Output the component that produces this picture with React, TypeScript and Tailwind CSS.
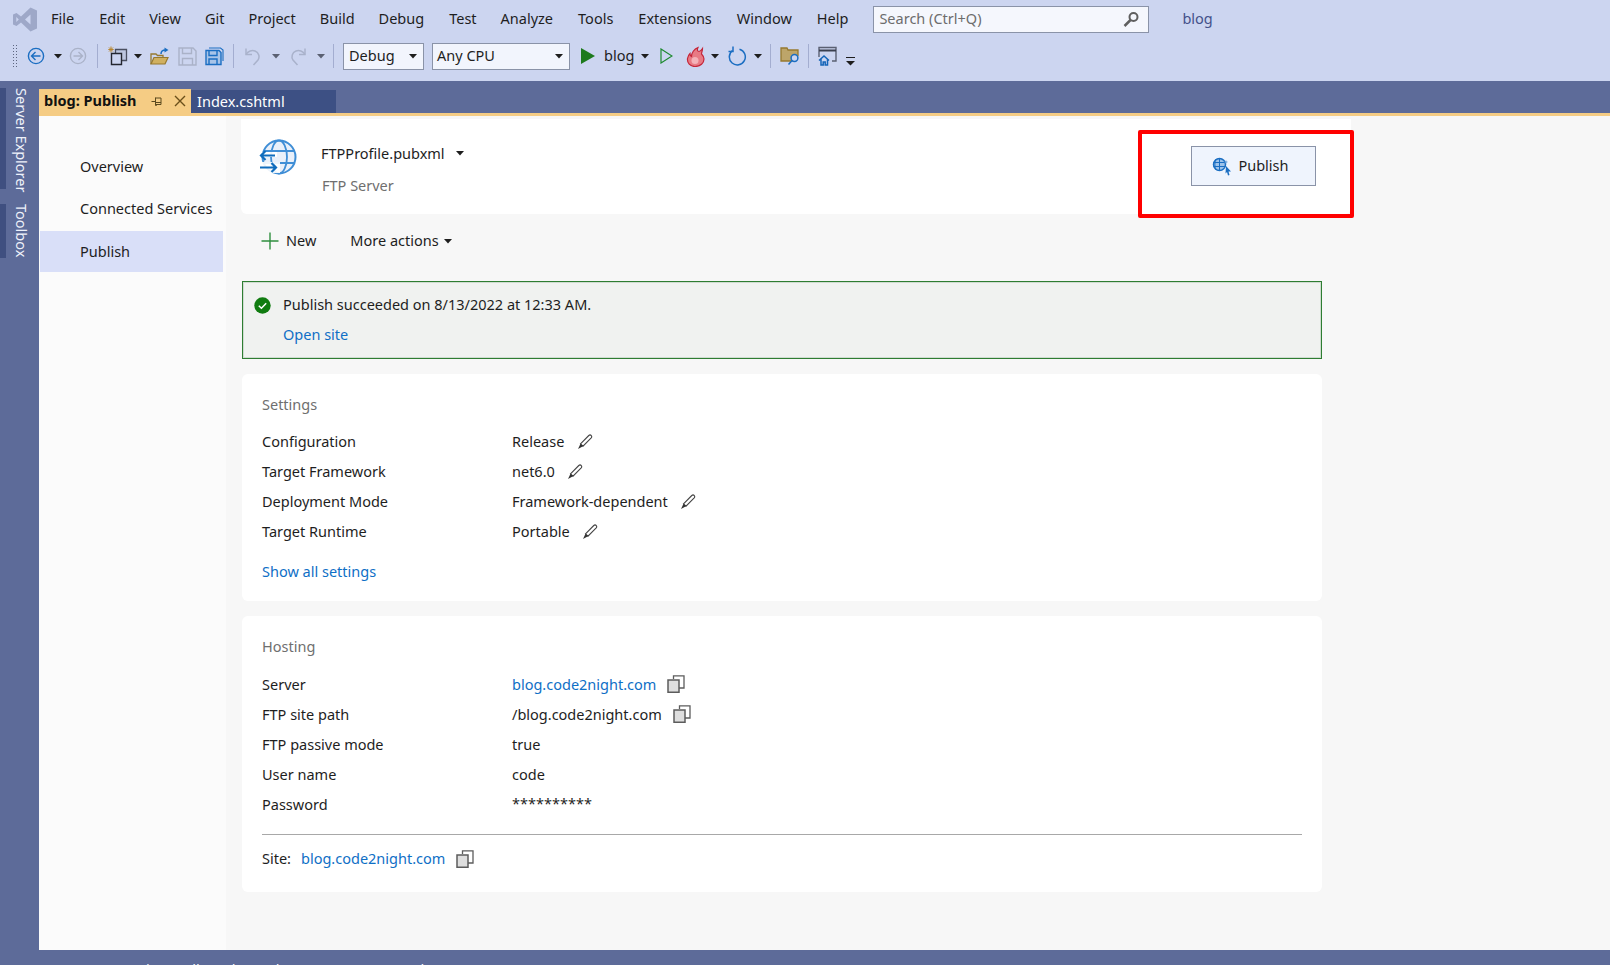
import React from "react";

const Caret = ({ c = "#1e1e1e", className = "" }: { c?: string; className?: string }) => (
  <svg width="8" height="5" viewBox="0 0 8 5" className={className}><path d="M0 0h8L4 4.5z" fill={c} /></svg>
);

const Sep = ({ className = "" }: { className?: string }) => <div className={`w-px h-[24px] bg-[#a3add0] ${className}`} />;

const Back = ({ c, flip = false }: { c: string; flip?: boolean }) => (
  <svg width="18" height="18" viewBox="0 0 18 18" fill="none" stroke={c} strokeWidth="1.4">
    <circle cx="9" cy="9" r="7.6" />
    <path d={flip ? "M4.5 9h9M9.5 5l4 4-4 4" : "M13.5 9h-9M8.5 5l-4 4 4 4"} />
  </svg>
);

const NewProj = () => (
  <svg width="20" height="20" viewBox="0 0 20 20" fill="none">
    <path d="M3 .5v6M.3 3.5h5.4M1 1.5l4 4M5 1.5l-4 4" stroke="#b8862f" strokeWidth="1" />
    <path d="M7.5 3.5h11v11h-11z" fill="#bdc6df" stroke="#4a4f60" strokeWidth="1.3" />
    <path d="M3.5 7.5h10v11h-10z" fill="#ccd5f0" stroke="#23262f" strokeWidth="1.4" />
  </svg>
);

const OpenF = () => (
  <svg width="19" height="19" viewBox="0 0 19 19" fill="none">
    <path d="M1 17V7h5l1.500 1.500H13V11" stroke="#96792f" strokeWidth="1.3" />
    <path d="M1 17l3-6.500h14L15 17z" fill="#d0b060" stroke="#96792f" strokeWidth="1.200" />
    <path d="M11 7c0-2.500 2-4 4.500-4" stroke="#1b6ec2" strokeWidth="1.500" />
    <path d="M14.500 .5L18.500 3l-4 2.500z" fill="#1b6ec2" />
  </svg>
);

const Floppy = ({ c, all = false }: { c: string; all?: boolean }) => (
  <svg width="19" height="19" viewBox="0 0 19 19" fill="none" stroke={c} strokeWidth="1.400">
    {all && <path d="M4 1h11.500l2.500 2v11" strokeWidth="1.100" />}
    <path d={all ? "M1 3.500h13l2 2V17.500H1z" : "M1 1h14l3 3v14H1z"} fill={all ? "#a8c4e8" : "none"} />
    {all ? <path d="M4 3.500v5h8v-5M4 17.500v-5.500h8v5.500" /> : <path d="M4.500 1v5.500h9V1M4.500 18v-6.500h10V18" />}
  </svg>
);

const Undo = ({ flip = false }: { flip?: boolean }) => (
  <svg width="17" height="19" viewBox="0 0 17 19" fill="none" stroke="#a9b2cb" strokeWidth="1.500" style={flip ? { transform: "scaleX(-1)" } : undefined}>
    <path d="M2 1.500v6h6" />
    <path d="M2 7.500C4 4 8 3 11 4c4 1.500 5 6 3 9l-4.500 5" />
  </svg>
);

const Fire = () => (
  <svg width="19" height="21" viewBox="0 0 19 21">
    <path d="M9 20.500c-5 0-8-3.500-7.500-8C2 10 3 8.500 4 7.500c0 1.500.5 2.500 1.500 3C5.500 7 8 3 12 1.500 10.800 4 11.500 5.500 13 5.500c.8 0 2-.8 3.500-3C16.500 5 15.500 6.500 15.500 8c1.500 1.500 2.500 3 2.500 5 0 4-3.500 7.500-9 7.500z" fill="#e87a84" stroke="#c4263a" strokeWidth="1.200" />
    <ellipse cx="9" cy="14.500" rx="3.500" ry="3.500" fill="#f4b2b8" />
  </svg>
);

const Refresh = () => (
  <svg width="19" height="20" viewBox="0 0 19 20" fill="none" stroke="#1b6ec2" strokeWidth="1.500">
    <path d="M11.500 3.200A8 8 0 1 1 4.500 4.500" />
    <path d="M5 0.500v5H0.500" />
  </svg>
);

const FolderSearch = () => (
  <svg width="20" height="20" viewBox="0 0 20 20" fill="none">
    <path d="M1 15V2h6l1 2h10v5.500L12 15z" fill="#bda56a" stroke="#96792f" strokeWidth="1.300" />
    <circle cx="14.500" cy="12" r="3.400" fill="#ccd5f0" stroke="#1b6ec2" strokeWidth="1.500" />
    <path d="M12 14.500l-3.500 4" stroke="#1b6ec2" strokeWidth="1.500" />
  </svg>
);

const WinHome = () => (
  <svg width="19" height="20" viewBox="0 0 19 20" fill="none">
    <path d="M1 11V1.500h17V15h-4" stroke="#5a6072" strokeWidth="1.400" />
    <path d="M1 4.500h17" stroke="#3a3f4e" strokeWidth="2" />
    <path d="M1 14.500L6 10l5 4.500M3 13v6h2.200v-3h2v3H9.500v-6" stroke="#1565b8" strokeWidth="1.500" />
  </svg>
);

const Overflow = () => (
  <svg width="9" height="9" viewBox="0 0 9 9"><path d="M0 .5h9" stroke="#1e1e1e" strokeWidth="1" /><path d="M0 4h9L4.500 8.500z" fill="#1e1e1e" /></svg>
);

const Grip = () => (
  <div className="w-[6px] h-[24px] bg-[radial-gradient(#5d6680_0.8px,transparent_1px)] bg-[length:3px_3px]" />
);

const VsLogo = () => (
  <svg width="24" height="25" viewBox="0 0 24 25">
    <path d="M17.500 0.500L24 3.500V21.500L17.500 24.500 8 15.500 3.500 19 0 17.500V7.500L3.500 6 8 9.500zM17.500 7.500L12 12.500l5.500 5zM3.300 10v5l2.500-2.500z" fill="#9ea8c8" fillRule="evenodd" />
  </svg>
);

const SearchIco = () => (
  <svg width="17" height="17" viewBox="0 0 17 17" fill="none" stroke="#5f5f5f">
    <circle cx="10.500" cy="6" r="4" strokeWidth="2" />
    <path d="M7.500 9l-6 6" strokeWidth="2.500" />
  </svg>
);

const Globe = () => (
  <svg width="39" height="38" viewBox="0 0 39 38" fill="none">
    <circle cx="21" cy="18" r="16.500" fill="#e9f0fa" stroke="#3f8ed6" strokeWidth="2" />
    <ellipse cx="21" cy="18" rx="8" ry="16.500" stroke="#3f8ed6" strokeWidth="1.800" />
    <path d="M5.500 12h31M5 24h32" stroke="#3f8ed6" strokeWidth="1.800" />
    <path d="M0 13h19v5H0zM3 23h19v11H3z" fill="#fff" opacity=".9" />
    <path d="M17 16.500H3M7.500 12L3 16.500 7.500 21" stroke="#0f6cbd" strokeWidth="2.200" />
    <path d="M2 28.500h16M13.500 24l4.500 4.500-4.500 4.500" stroke="#0f6cbd" strokeWidth="2.200" />
  </svg>
);

const PubIcon = () => (
  <svg width="20" height="19" viewBox="0 0 20 19" fill="none">
    <circle cx="7.500" cy="7.500" r="6" fill="#9cc2ea" stroke="#1b6ec2" strokeWidth="1.500" />
    <path d="M1.500 5.500h12M1.500 9.500h12M7.500 1.500v12M4 2c-1.500 3-1.500 8 0 11" stroke="#1b6ec2" strokeWidth="1" />
    <path d="M14 3.500v3M12.500 5h3" stroke="#6aa0d8" strokeWidth="1" />
    <path d="M14 9l5 5.500h-2.500l1 3.500-1.500.5-1-3.500-1.500 1.500z" fill="#1b6ec2" />
  </svg>
);

const Plus = () => (
  <svg width="18" height="18" viewBox="0 0 18 18" fill="none" stroke="#2f8f3f" strokeWidth="1.400"><path d="M9 .5v17M.5 9h17" /></svg>
);

const Check = () => (
  <svg width="17" height="17" viewBox="0 0 17 17">
    <circle cx="8.500" cy="8.500" r="8.200" fill="#107c10" />
    <path d="M4.800 8.800l2.600 2.500 4.800-5" fill="none" stroke="#fff" strokeWidth="1.500" />
  </svg>
);

const Pencil = ({ className = "" }: { className?: string }) => (
  <svg width="16" height="16" viewBox="0 0 16 16" fill="none" className={className}>
    <path d="M3.500 9.800L11.800 1.500c.8-.7 1.800-.6 2.400 0 .6.700.6 1.700 0 2.400L6 12.200z" stroke="#444" strokeWidth="1.100" />
    <path d="M3.500 9.800L6 12.200 1 15z" fill="#333" />
  </svg>
);

const Copy = ({ className = "" }: { className?: string }) => (
  <svg width="18" height="18" viewBox="0 0 18 18" fill="none" className={className}>
    <path d="M6.500 4V.8h10.500V13H12" stroke="#5c5c5c" strokeWidth="1.300" />
    <path d="M1 5h11v12.200H1z" fill="#dedede" stroke="#5c5c5c" strokeWidth="1.500" />
  </svg>
);

const Row = ({ k, children }: { k: string; children: React.ReactNode }) => (
  <div className="flex items-center h-[30px]">
    <div className="w-[250px]">{k}</div>
    <div className="flex items-center">{children}</div>
  </div>
);

const Link = ({ children }: { children: React.ReactNode }) => <span className="text-[#0f6fc6]">{children}</span>;

const menu: [string, string][] = [
  ["File", "ml-[14px]"], ["Edit", "ml-[25px]"], ["View", "ml-[24px]"], ["Git", "ml-[24px]"], ["Project", "ml-[24px]"],
  ["Build", "ml-[24px]"], ["Debug", "ml-[24px]"], ["Test", "ml-[25px]"], ["Analyze", "ml-[24px]"], ["Tools", "ml-[25px]"],
  ["Extensions", "ml-[25px]"], ["Window", "ml-[25px]"], ["Help", "ml-[25px]"],
];

export default function App() {
  return (
    <div className="relative w-[1610px] h-[965px] overflow-hidden flex flex-col bg-[#5d6b99] text-[14.5px] text-[#1e1e1e] font-['Noto_Sans','Open_Sans',sans-serif]">
      <header className="h-[81px] shrink-0 bg-[#ccd5f0] flex flex-col">
        <div className="h-[38px] flex items-center pl-[13px] shrink-0">
          <VsLogo />
          <nav className="flex items-center">
            {menu.map(([m, c]) => (
              <span key={m} className={c}>{m}</span>
            ))}
          </nav>
          <div className="ml-[25px] w-[276px] h-[27px] bg-[#f5f7fd] border border-[#8a93a8] flex items-center justify-between pl-[5px] pr-[8px] text-[#6d6d6d]">
            <span>Search (Ctrl+Q)</span>
            <SearchIco />
          </div>
          <span className="ml-[33px] text-[#44518a]">blog</span>
        </div>
        <div className="h-[36px] flex items-center pl-[12px]">
          <Grip />
          <div className="ml-[9px]"><Back c="#1b6ec2" /></div>
          <Caret className="ml-[9px]" />
          <div className="ml-[7px]"><Back c="#aab2c8" flip /></div>
          <Sep className="ml-[10px]" />
          <div className="ml-[10px]"><NewProj /></div>
          <Caret className="ml-[6px]" />
          <div className="ml-[8px]"><OpenF /></div>
          <div className="ml-[9px]"><Floppy c="#aab2c8" /></div>
          <div className="ml-[8px]"><Floppy c="#1b6ec2" all /></div>
          <Sep className="ml-[9px]" />
          <div className="ml-[10px]"><Undo /></div>
          <Caret c="#5a6072" className="ml-[11px]" />
          <div className="ml-[10px]"><Undo flip /></div>
          <Caret c="#5a6072" className="ml-[10px]" />
          <Sep className="ml-[8px]" />
          <div className="ml-[9px] w-[81px] h-[27px] bg-[#f2f5fd] border border-[#8a93a8] flex items-center justify-between pl-[5px] pr-[6px]">
            <span>Debug</span><Caret />
          </div>
          <div className="ml-[8px] w-[138px] h-[27px] bg-[#f2f5fd] border border-[#8a93a8] flex items-center justify-between pl-[4px] pr-[6px]">
            <span>Any CPU</span><Caret />
          </div>
          <svg width="14" height="16" viewBox="0 0 14 16" className="ml-[11px]"><path d="M0 0l14 8-14 8z" fill="#1d7a1d" /></svg>
          <span className="ml-[9px]">blog</span>
          <Caret className="ml-[7px]" />
          <svg width="13" height="16" viewBox="0 0 13 16" fill="none" className="ml-[11px]"><path d="M1 1l11 7-11 7z" stroke="#1d8a2f" strokeWidth="1.200" /></svg>
          <div className="ml-[13px]"><Fire /></div>
          <Caret className="ml-[6px]" />
          <div className="ml-[9px]"><Refresh /></div>
          <Caret className="ml-[7px]" />
          <Sep className="ml-[8px]" />
          <div className="ml-[9px]"><FolderSearch /></div>
          <Sep className="ml-[8px]" />
          <div className="ml-[9px]"><WinHome /></div>
          <div className="ml-[9px] mt-[10px]"><Overflow /></div>
        </div>
      </header>

      <div className="flex-1 min-h-0 flex">
        <aside className="w-[39px] shrink-0 pt-[7px] flex flex-col gap-[15px] text-[#eef1fa]">
          <div className="flex h-[101px]">
            <div className="w-[6px] bg-[#3f4f80]" />
            <span className="ml-[4px] [writing-mode:vertical-rl] whitespace-nowrap">Server Explorer</span>
          </div>
          <div className="flex h-[54px]">
            <div className="w-[6px] bg-[#3f4f80]" />
            <span className="ml-[4px] [writing-mode:vertical-rl] whitespace-nowrap">Toolbox</span>
          </div>
        </aside>

        <div className="flex-1 min-w-0 flex flex-col">
          <div className="h-[32px] shrink-0 pt-[8px] flex">
            <div className="w-[152px] bg-[#f5cc84] flex items-center pl-[5px] font-bold text-[#111] whitespace-nowrap">
              <span>blog: Publish</span>
              <svg width="11" height="11" viewBox="0 0 11 11" fill="none" stroke="#5c4a1e" className="ml-[14px]"><path d="M.5 5.500h4M4.500 1.500v8h1.200M4.500 2h5.500v6.500H4.500M4.500 6.500H10" /></svg>
              <svg width="12" height="12" viewBox="0 0 12 12" fill="none" stroke="#6b4f1a" strokeWidth="1.400" className="ml-[12px]"><path d="M1 1l10 10M11 1L1 11" /></svg>
            </div>
            <div className="w-[145px] mt-px bg-[#3d5084] text-white pl-[6px] flex items-center">Index.cshtml</div>
          </div>
          <div className="h-[3px] shrink-0 bg-[#f5cc84]" />
          <div className="h-[834px] shrink-0 flex">
            <nav className="w-[187px] shrink-0 bg-[#fbfbfb] pt-[31px] pr-[3px] pl-px">
              <div className="h-[40px] flex items-center pl-[40px]">Overview</div>
              <div className="h-[43px] flex items-center pl-[40px]">Connected Services</div>
              <div className="h-[41px] mt-px flex items-center pl-[40px] bg-[#d9dff8]">Publish</div>
            </nav>
            <main className="flex-1 min-w-0 bg-[#f7f7f7] pl-[15px] pt-[3px]">
              <div className="w-[1110px] h-[95px] bg-white rounded-b-md flex justify-between">
                <div className="flex">
                  <div className="ml-[17px] mt-[20px]"><Globe /></div>
                  <div className="ml-[24px] mt-[24px]">
                    <div className="flex items-center">
                      <span>FTPProfile.pubxml</span>
                      <Caret className="ml-[11px]" />
                    </div>
                    <div className="mt-[10px] ml-px text-[#6f6f6f]">FTP Server</div>
                  </div>
                </div>
                <div className="mt-[27px] mr-[35px] w-[125px] h-[40px] bg-[#eff4fd] border border-[#8a93a8] flex items-center justify-center gap-[6px] pr-[6px]">
                  <PubIcon />
                  <span>Publish</span>
                </div>
              </div>
              <div className="h-[52px] flex items-center pl-[20px] mt-px">
                <Plus />
                <span className="ml-[7px]">New</span>
                <span className="ml-[34px]">More actions</span>
                <Caret className="ml-[5px]" />
              </div>
              <div className="w-[1080px] h-[78px] mt-[14px] ml-px bg-[#f0f2f0] border border-[#2e7d32] outline outline-[#cfdcd0] -outline-offset-2 pl-[11px] pt-[13px] flex">
                <div className="mt-[2px]"><Check /></div>
                <div className="ml-[12px]">
                  <div className="h-[20px] flex items-center">Publish succeeded on 8/13/2022 at 12:33 AM.</div>
                  <div className="h-[20px] mt-[10px] flex items-center"><Link>Open site</Link></div>
                </div>
              </div>
              <section className="w-[1080px] h-[227px] mt-[15px] ml-px bg-white rounded-md pl-[20px] pt-[21px]">
                <div className="h-[20px] flex items-center text-[#6f6f6f]">Settings</div>
                <div className="mt-[12px]">
                  <Row k="Configuration">Release<Pencil className="ml-[13px]" /></Row>
                  <Row k="Target Framework">net6.0<Pencil className="ml-[12px]" /></Row>
                  <Row k="Deployment Mode">Framework-dependent<Pencil className="ml-[12px]" /></Row>
                  <Row k="Target Runtime">Portable<Pencil className="ml-[12px]" /></Row>
                </div>
                <div className="mt-[15px] h-[20px] flex items-center"><Link>Show all settings</Link></div>
              </section>
              <section className="w-[1080px] h-[276px] mt-[15px] ml-px bg-white rounded-md pl-[20px] pr-[20px] pt-[21px]">
                <div className="h-[20px] flex items-center text-[#6f6f6f]">Hosting</div>
                <div className="mt-[13px]">
                  <Row k="Server"><Link>blog.code2night.com</Link><Copy className="ml-[11px] -mt-[2px]" /></Row>
                  <Row k="FTP site path">/blog.code2night.com<Copy className="ml-[11px] -mt-[2px]" /></Row>
                  <Row k="FTP passive mode">true</Row>
                  <Row k="User name">code</Row>
                  <Row k="Password"><span className="-mt-[3px]">**********</span></Row>
                </div>
                <div className="h-px bg-[#a8a8a8] mt-[14px]" />
                <div className="mt-[14px] h-[20px] flex items-center">
                  <span>Site:</span>
                  <span className="ml-[10px]"><Link>blog.code2night.com</Link></span>
                  <Copy className="ml-[11px]" />
                </div>
              </section>
            </main>
          </div>
          <div className="flex pt-[9px] text-white whitespace-nowrap leading-[20px]">
            <span className="w-[61px]">Output</span>
            <span className="w-[75px]">Error List</span>
            <span className="w-[77px]">Call Stack</span>
            <span>Package Manager Console</span>
          </div>
        </div>
      </div>

      <div className="absolute left-[1138px] top-[130px] w-[216px] h-[88px] border-[4px] border-[#ff0000] rounded-[2px]" />
    </div>
  );
}
